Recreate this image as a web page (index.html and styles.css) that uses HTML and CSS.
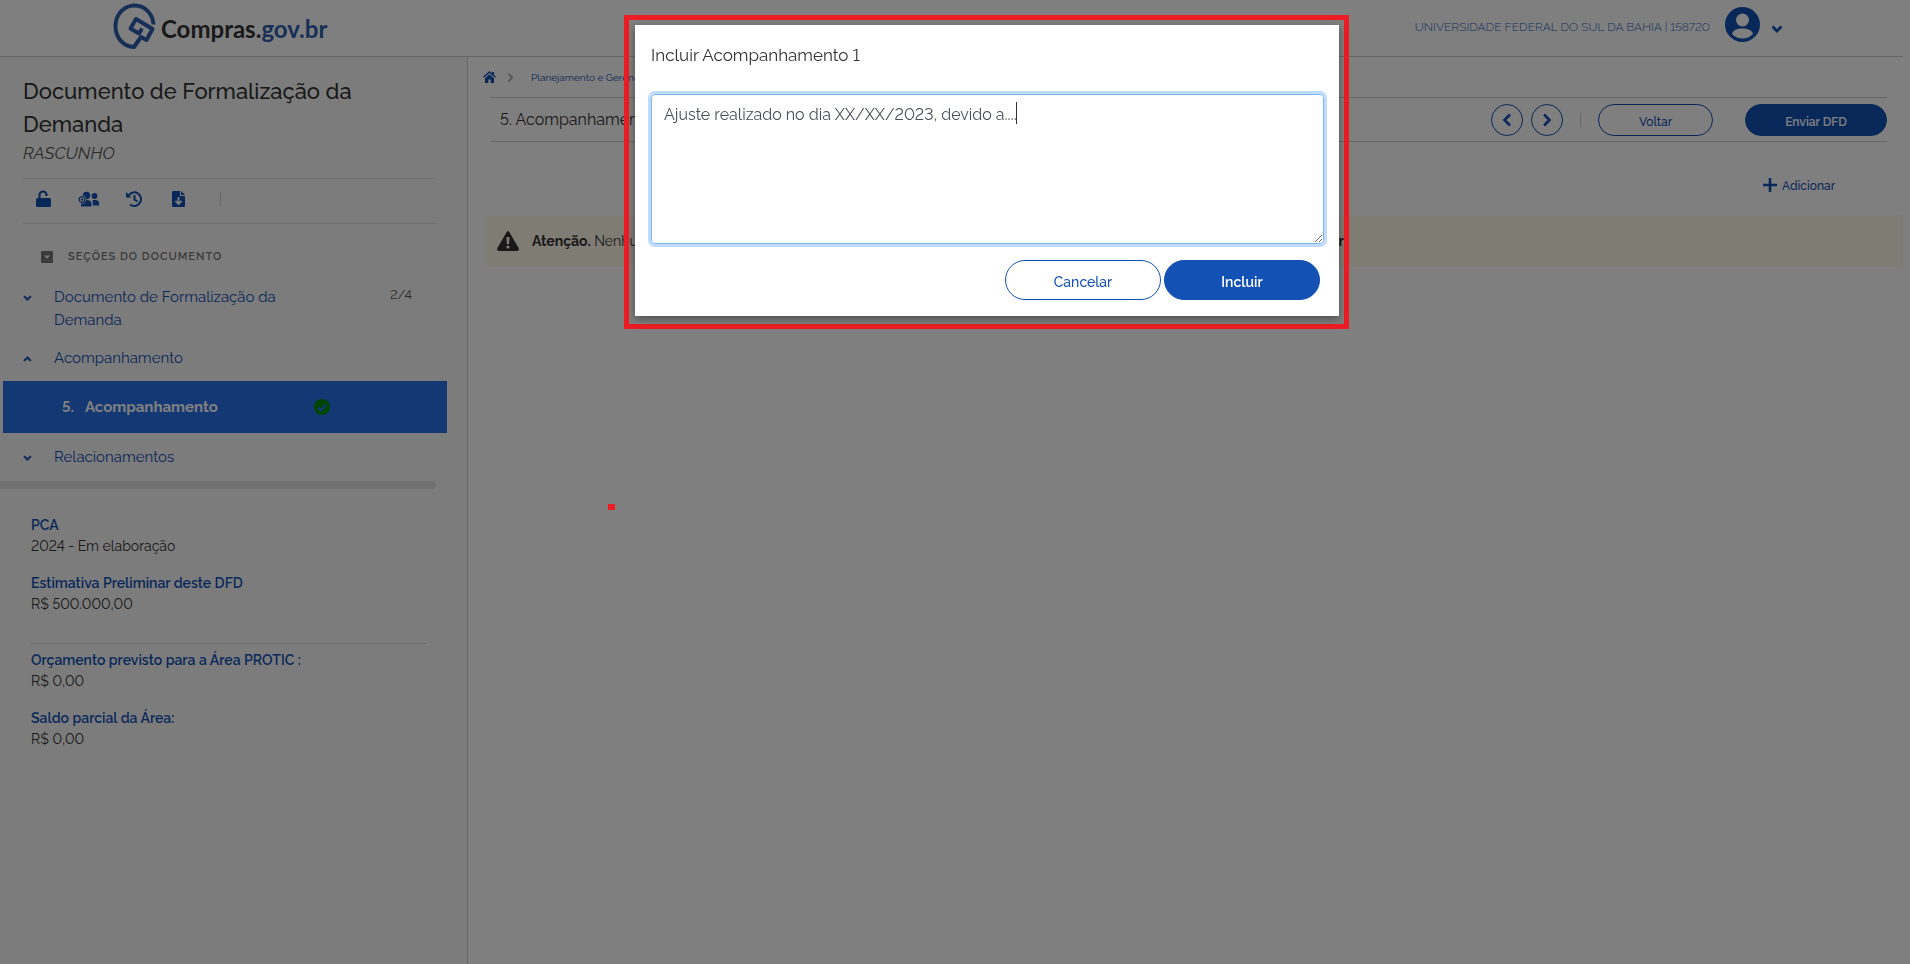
FILE: index.html
```html
<!DOCTYPE html>
<html lang="pt-BR">
<head>
<meta charset="utf-8">
<title>Compras.gov.br - Documento de Formalização da Demanda</title>
<link rel="stylesheet" href="styles.css">
</head>
<body>
<svg class="symbols" aria-hidden="true">
  <symbol id="chevron" viewBox="0 0 12 8"><path d="M1.500 1.500 6 6l4.500-4.500" fill="none" stroke="currentColor" stroke-width="2.800"/></symbol>
  <symbol id="angle" viewBox="0 0 10 14"><path d="M2 1.500 7.500 7 2 12.500" fill="none" stroke="currentColor" stroke-width="2.600"/></symbol>
</svg>

<header class="topbar">
  <a class="logo" href="#" aria-label="Compras.gov.br">
    <svg width="44" height="47" viewBox="0 0 44 47" fill="none" stroke="#2f5fae" stroke-width="4" stroke-linejoin="round">
      <path d="M40.500 21.500C40 11 32 2.500 21.500 2.500 11 2.500 2.500 11.500 2.500 23c0 12 8 20.500 18.500 21l7-10 5.500 3L39.500 26 23 16l-5.500 9.500 8.500 5 3-5"/>
    </svg>
    <span class="logo-text">Compras.<span class="logo-gov">gov.br</span></span>
  </a>
  <div class="user">
    <span class="user-org">UNIVERSIDADE FEDERAL DO SUL DA BAHIA | 158720</span>
    <button class="user-menu" type="button" aria-label="Menu do usuário">
      <svg width="35" height="35" viewBox="0 0 35 35"><circle cx="17.500" cy="17.500" r="17.500" fill="currentColor"/><circle cx="17.500" cy="13" r="6.500" fill="#fff"/><path d="M7 27c1-4 5-5.500 10.500-5.500S27 23 28 27c-3 3-6.500 4.500-10.500 4.500S10 30 7 27z" fill="#fff"/></svg>
      <svg class="user-arrow" width="12" height="8"><use href="#chevron"/></svg>
    </button>
  </div>
</header>

<div class="layout">
  <aside class="sidebar">
    <div class="doc-head">
      <h1>Documento de Formalização da Demanda</h1>
      <p class="status">RASCUNHO</p>
      <div class="tools">
        <button type="button" aria-label="Desbloquear"><svg width="15" height="17" viewBox="0 0 15 17"><rect y="8" width="15" height="9" rx="1.500" fill="currentColor"/><path d="M3.500 8.500V5a3.500 3.500 0 0 1 7 0v1" fill="none" stroke="currentColor" stroke-width="2.200"/></svg></button>
        <button type="button" aria-label="Responsáveis"><svg width="21" height="16" viewBox="0 0 21 16" fill="currentColor"><circle cx="8.500" cy="4.500" r="3.700"/><circle cx="16.500" cy="5" r="2.900"/><path d="M3 15.500v-3Q4 9 8.500 9q5 0 5 4v2.500zM14.500 9h2.500q4 0 4 3v2.500h-6z"/><circle cx="4" cy="8.500" r="4" fill="#f9f9f9"/><circle cx="4" cy="8.500" r="2.900" fill="none" stroke="currentColor" stroke-width="1.200"/><circle cx="4" cy="8.500" r="1.200"/></svg></button>
        <button type="button" aria-label="Histórico"><svg width="16" height="16" viewBox="0 0 16 16" fill="none" stroke="currentColor" stroke-width="2"><path d="M2.500 4.500A6.800 6.800 0 1 1 4 13.500M8.500 4v4.500l3 2"/><path d="M0 1v5.500h5.500z" fill="currentColor" stroke="none"/></svg></button>
        <button class="download" type="button" aria-label="Baixar documento"><svg width="13" height="16" viewBox="0 0 13 16"><path d="M0 1q0-1 1-1h7v5h5v10q0 1-1 1H1q-1 0-1-1zM9 0l4 4H9z" fill="currentColor"/><path d="M6.500 6v7M3.500 10l3 3 3-3" fill="none" stroke="#f9f9f9" stroke-width="1.800"/></svg></button>
        <span class="divider"></span>
      </div>
    </div>

    <nav class="sections">
      <h2><svg width="12" height="12" viewBox="0 0 12 12"><rect width="12" height="12" rx="1" fill="currentColor"/><path d="M3 4.500h6l-3 3.300z" fill="#f9f9f9"/></svg>SEÇÕES DO DOCUMENTO</h2>
      <a class="item" href="#"><svg width="9" height="6"><use href="#chevron"/></svg><span class="item-name">Documento de Formalização da Demanda</span><span class="count">2/4</span></a>
      <a class="item" href="#"><svg class="up" width="9" height="6"><use href="#chevron"/></svg><span class="item-name">Acompanhamento</span></a>
      <a class="item-active" href="#"><span>5.</span><span class="active-name">Acompanhamento</span><svg width="16" height="16" viewBox="0 0 16 16"><circle cx="8" cy="8" r="8" fill="#008a00"/><path d="m4 8.500 2.800 2.800L12 5.800" fill="none" stroke="#2670e8" stroke-width="2.200"/></svg></a>
      <a class="item" href="#"><svg width="9" height="6"><use href="#chevron"/></svg><span class="item-name">Relacionamentos</span></a>
    </nav>
    <div class="scrollbar"></div>

    <dl class="summary">
      <div><dt>PCA</dt><dd>2024 - Em elaboração</dd></div>
      <div><dt>Estimativa Preliminar deste DFD</dt><dd>R$ 500.000,00</dd></div>
      <div class="budget"><dt>Orçamento previsto para a Área PROTIC :</dt><dd>R$ 0,00</dd></div>
      <div><dt>Saldo parcial da Área:</dt><dd>R$ 0,00</dd></div>
    </dl>
  </aside>

  <main class="content">
    <nav class="breadcrumb">
      <a href="#" aria-label="Início"><svg width="13" height="12" viewBox="0 0 13 12" fill="currentColor"><path d="M6.500 0 9 2.200V1h2v3l2 1.800-.9 1L6.500 2 .9 6.800 0 5.800z"/><path d="M2 7.200 6.500 3.300 11 7.200V12H7.700V8.500H5.300V12H2z"/></svg></a>
      <svg class="crumb-sep" width="7" height="11"><use href="#angle"/></svg>
      <a class="crumb" href="#">Planejamento e Gerenciamento</a>
    </nav>
    <div class="page-bar">
      <h2>5. Acompanhamento</h2>
      <div class="page-actions">
        <button class="round" type="button" aria-label="Anterior"><svg class="flip" width="10" height="14"><use href="#angle"/></svg></button>
        <button class="round" type="button" aria-label="Próximo"><svg width="10" height="14"><use href="#angle"/></svg></button>
        <span class="divider"></span>
        <button class="pill back" type="button">Voltar</button>
        <button class="pill primary send" type="button">Enviar DFD</button>
      </div>
    </div>
    <div class="add-row">
      <button class="add" type="button"><svg width="14" height="14" viewBox="0 0 14 14"><path d="M7 0v14M0 7h14" stroke="currentColor" stroke-width="2.600"/></svg><span>Adicionar</span></button>
    </div>
    <div class="alert">
      <svg width="22" height="20" viewBox="0 0 22 20"><path d="M9.700 1q1.300-2 2.600 0l9.300 16q1 2.500-1.300 3H1.700q-2.300-.5-1.300-3z" fill="#333"/><path d="M9.500 6h3l-.4 7h-2.200z" fill="#fff8e8"/><circle cx="11" cy="16" r="1.600" fill="#fff8e8"/></svg>
      <p><span><strong>Atenção.</strong> Nenhum acompanhamento foi incluído neste documento.</span><strong>Adicionar</strong></p>
    </div>
  </main>
</div>

<div class="backdrop"></div>
<div class="mark"></div>
<div class="frame">
  <form class="modal" role="dialog" aria-labelledby="modal-title">
    <label class="modal-title" id="modal-title" for="texto">Incluir Acompanhamento 1</label>
    <div class="field">
      <textarea id="texto" spellcheck="false">Ajuste realizado no dia XX/XX/2023, devido a....</textarea>
      <span class="caret"></span>
    </div>
    <div class="modal-actions">
      <button class="pill large" type="button">Cancelar</button>
      <button class="pill primary large" type="button">Incluir</button>
    </div>
  </form>
</div>
</body>
</html>
```
FILE: styles.css
```css
* { box-sizing: border-box; }
body {
  margin: 0;
  padding-right: 7px;
  min-height: 100vh;
  display: flex;
  flex-direction: column;
  background: #fff;
  color: #333;
  font-family: Raleway, Lato, "Open Sans", sans-serif;
  font-size: 14px;
  font-variant-numeric: lining-nums;
}
h1, h2, p, dl, dd { margin: 0; }
a { color: #1351b4; text-decoration: none; }
button { font-family: inherit; color: #1351b4; background: none; border: 0; padding: 0; cursor: pointer; }
svg { flex: none; display: block; }
strong { font-weight: 700; }
.symbols { position: absolute; width: 0; height: 0; }
.divider { width: 1px; height: 14px; background: #ccc; }

.topbar {
  height: 57px;
  padding: 0 120px 0 113px;
  display: flex;
  justify-content: space-between;
  border-bottom: 1px solid #ccc;
}
.logo { display: flex; align-items: center; gap: 4px; padding-bottom: 4px; }
.logo-text { color: #333; font-family: Lato, sans-serif; font-size: 24px; font-weight: 700; padding-top: 4px; }
.logo-gov { color: #2f5fae; }
.user { display: flex; align-items: center; gap: 15px; padding-bottom: 7px; }
.user-org { color: #2c69bd; font-size: 12px; font-weight: 300; padding-top: 4px; }
.user-menu { display: flex; align-items: center; gap: 11px; }
.user-arrow { margin-top: 9px; }

.layout { flex: 1; display: flex; }
.sidebar { width: 468px; flex: none; background: #f9f9f9; border-right: 1px solid #ccc; }
.doc-head { padding: 18px 31px 0 23px; }
h1 { font-size: 22px; font-weight: 500; line-height: 33px; padding-right: 60px; }
.status { font-size: 17px; font-style: italic; line-height: 24px; color: #555; }
.tools {
  display: flex;
  align-items: center;
  gap: 27px;
  height: 46px;
  margin-top: 13px;
  padding: 0 13px 5px;
  border-top: 1px solid #ddd;
  border-bottom: 1px solid #ddd;
}
.download { margin: 0 8px 0 3px; }

.sections h2 {
  display: flex;
  align-items: center;
  gap: 15px;
  margin: 24px 0 20px 41px;
  color: #777;
  font-size: 11px;
  font-weight: 600;
  line-height: 18px;
  letter-spacing: 1px;
}
.item { display: flex; padding: 0 55px 15px 23px; font-size: 15px; line-height: 23px; }
.item svg { margin: 9px 22px 0 0; }
.item-name { flex: 0 1 240px; }
.up { transform: rotate(180deg); }
.count { margin-left: auto; color: #555; font-size: 13px; line-height: 18px; }
.item-active {
  display: flex;
  align-items: center;
  height: 52px;
  margin: -4px 20px 13px 3px;
  padding: 0 0 1px 59px;
  background: #2670e8;
  color: #fff;
  font-size: 15px;
  font-weight: 700;
}
.active-name { width: 229px; margin-left: 11px; }
.scrollbar { width: 436px; height: 8px; margin-top: -3px; border-radius: 0 4px 4px 0; background: #e0e0e0; }

.summary { padding: 26px 40px 0 31px; font-size: 14px; line-height: 21px; }
.summary div { margin-bottom: 16px; }
.summary dt { color: #1351b4; font-weight: 600; }
.summary .budget { margin-top: 28px; padding-top: 6px; border-top: 1px solid #ddd; }

.content { flex: 1; min-width: 0; }
.breadcrumb { display: flex; align-items: center; height: 40px; padding-left: 15px; font-size: 10px; }
.crumb { font-weight: 400; }
.crumb-sep { margin: 0 17px 0 11px; color: #aaa; }
.page-bar {
  display: flex;
  align-items: center;
  justify-content: space-between;
  height: 45px;
  margin: 0 16px 0 23px;
  padding-left: 9px;
  border-top: 1px solid #ccc;
  border-bottom: 1px solid #ccc;
}
.page-bar h2 { font-size: 16px; font-weight: 400; }
.page-actions { display: flex; align-items: center; }
.pill, .round { border: 1px solid #1351b4; border-radius: 20px; height: 32px; font-size: 12px; font-weight: 500; }
.pill { padding-top: 4px; }
.round { display: flex; align-items: center; justify-content: center; width: 32px; margin-right: 8px; }
.flip { transform: rotate(180deg); }
.page-actions .divider { margin: 0 17px 0 9px; }
.back { width: 115px; }
.send { width: 142px; margin-left: 32px; }
.primary { background: #1351b4; color: #fff; font-weight: 600; }
.add-row { display: flex; justify-content: flex-end; height: 73px; padding: 17px 68px 0 0; }
.add { display: flex; align-items: center; gap: 5px; height: 52px; font-size: 12px; font-weight: 500; }
.add span { padding-top: 2px; }
.alert { display: flex; align-items: center; gap: 13px; height: 52px; margin-left: 16px; padding-left: 13px; background: #fff8e8; font-size: 14px; }
.alert p { display: flex; justify-content: space-between; flex: 0 1 812px; }

.backdrop { position: fixed; inset: 0; background: rgba(0, 0, 0, .5); }
.mark { position: absolute; left: 608px; top: 504px; width: 7px; height: 6px; background: #ed1c24; }
.frame { position: absolute; left: 624px; top: 15px; width: 725px; padding: 5px 5px 8px 6px; border: 5px solid #ed1c24; }
.modal { padding: 18px 15px 16px 16px; background: #fff; box-shadow: 0 3px 8px rgba(0, 0, 0, .4); }
.modal-title { display: block; font-size: 17px; line-height: 24px; }
.field { position: relative; margin-top: 27px; }
textarea {
  display: block;
  width: 100%;
  height: 150px;
  padding: 8px 12px;
  border: 1px solid #80b4ee;
  border-radius: 4px;
  outline: 3px solid #bfdcfd;
  color: #495057;
  font-family: inherit;
  font-size: 16px;
  font-variant-numeric: inherit;
  line-height: 24px;
  resize: vertical;
}
.caret { position: absolute; left: 365px; top: 8px; width: 1px; height: 22px; background: #333; }
.modal-actions { display: flex; justify-content: flex-end; gap: 3px; margin: 16px 4px 0 0; }
.large { width: 156px; height: 40px; font-size: 14px; }
```
